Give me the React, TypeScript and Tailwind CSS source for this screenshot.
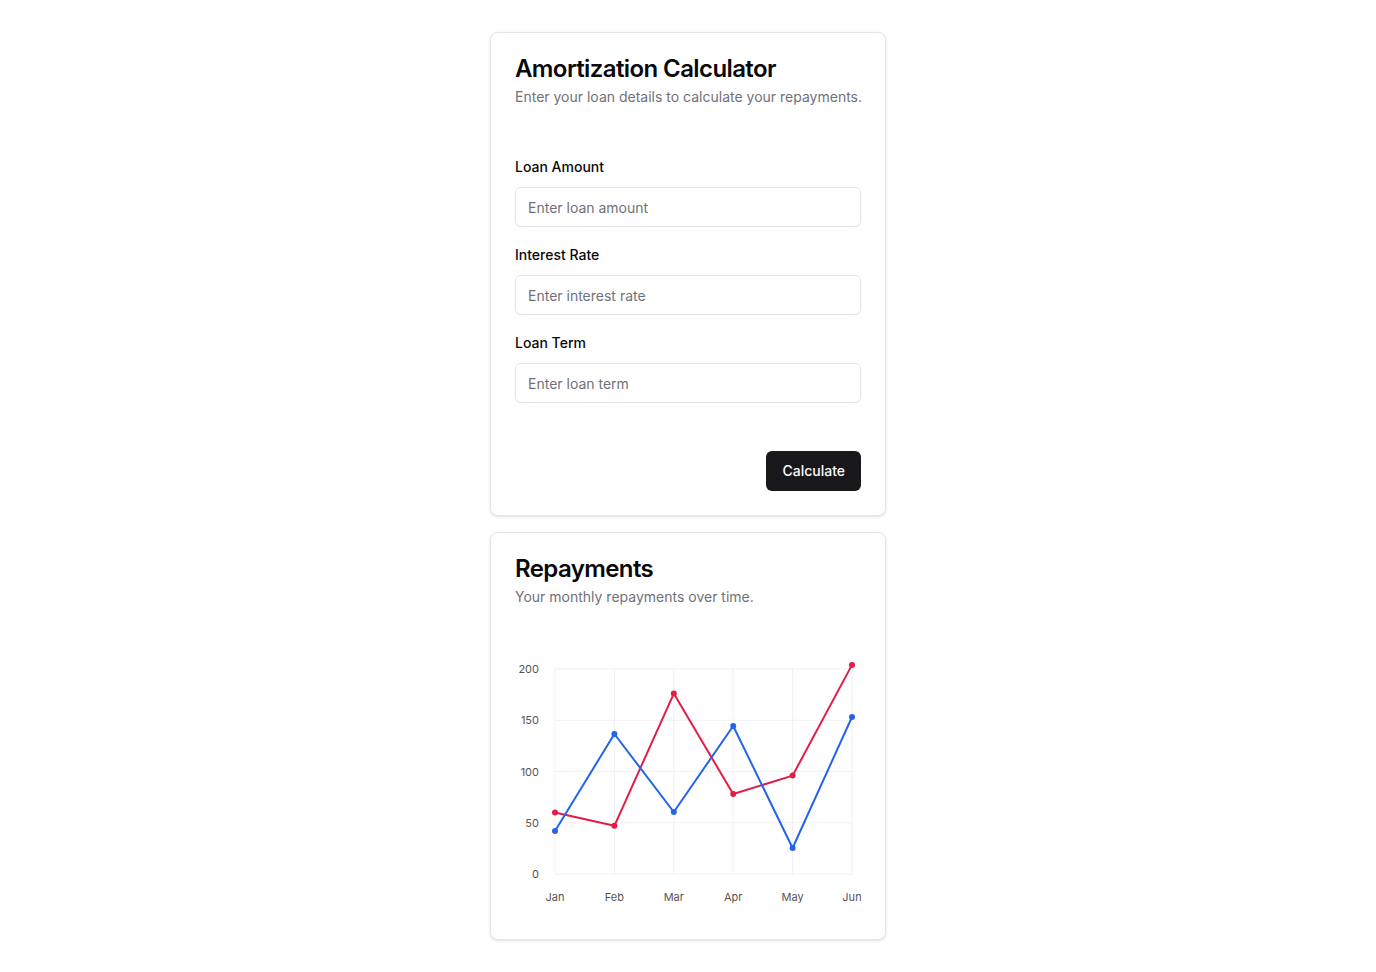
const months = ["Jan", "Feb", "Mar", "Apr", "May", "Jun"];
const red = [60, 47, 176, 78, 96, 204];
const blue = [42, 136.6, 60.5, 144.4, 25.4, 153.2];
const ticks = [0, 50, 100, 150, 200];

// plot area inside the svg
const left = 40;
const right = 337;
const top = 38;
const bottom = 243;

const xAt = (i: number) => left + (i * (right - left)) / (months.length - 1);
const yAt = (v: number) => bottom - (v / 200) * (bottom - top);

function RepaymentsChart() {
  const line = (vals: number[]) =>
    vals.map((v, i) => `${i === 0 ? "M" : "L"}${xAt(i)},${yAt(v)}`).join(" ");

  return (
    <svg width={346} height={284} className="block">
      {/* grid */}
      {ticks.map((t) => (
        <line key={t} x1={left} x2={right} y1={yAt(t)} y2={yAt(t)} stroke="#f1f1f3" strokeWidth={1} />
      ))}
      {months.map((m, i) => (
        <line key={m} x1={xAt(i)} x2={xAt(i)} y1={top} y2={bottom} stroke="#f1f1f3" strokeWidth={1} />
      ))}

      {/* axis labels */}
      {ticks.map((t) => (
        <text key={t} x={24} y={yAt(t) + 4} textAnchor="end" fontSize={11} fill="#555">
          {t}
        </text>
      ))}
      {months.map((m, i) => (
        <text key={m} x={xAt(i)} y={270} textAnchor="middle" fontSize={11} fill="#555">
          {m}
        </text>
      ))}

      {/* series */}
      <path d={line(red)} fill="none" stroke="#e11d48" strokeWidth={2} strokeLinejoin="round" />
      <path d={line(blue)} fill="none" stroke="#2563eb" strokeWidth={2} strokeLinejoin="round" />
      {red.map((v, i) => (
        <circle key={`r${i}`} cx={xAt(i)} cy={yAt(v)} r={3} fill="#e11d48" />
      ))}
      {blue.map((v, i) => (
        <circle key={`b${i}`} cx={xAt(i)} cy={yAt(v)} r={3} fill="#2563eb" />
      ))}
    </svg>
  );
}

function Field({ label, placeholder }: { label: string; placeholder: string }) {
  return (
    <div>
      <label className="block text-sm font-medium leading-none text-[#09090b]">{label}</label>
      <input
        type="text"
        placeholder={placeholder}
        className="mt-[13px] h-10 w-full rounded-md border border-[#e4e4e7] bg-white px-3 text-sm text-[#09090b] placeholder:text-[#71717a] outline-none"
      />
    </div>
  );
}

export default function App() {
  return (
    <div
      className="min-h-screen bg-white pt-8 pb-8"
      style={{ fontFamily: "Inter, 'Noto Sans', sans-serif" }}
    >
      <div className="mx-auto flex w-[396px] flex-col gap-4">
        {/* CALCULATOR */}
        <div className="rounded-lg border border-[#e4e4e7] bg-white shadow-sm">
          <div className="flex flex-col gap-1.5 p-6">
            <h2 className="text-2xl font-semibold leading-none tracking-tight text-[#09090b]">
              Amortization Calculator
            </h2>
            <p className="whitespace-nowrap text-sm text-[#71717a]">
              Enter your loan details to calculate your repayments.
            </p>
          </div>

          <div className="flex flex-col gap-[21px] px-6 pt-[29px]">
            <Field label="Loan Amount" placeholder="Enter loan amount" />
            <Field label="Interest Rate" placeholder="Enter interest rate" />
            <Field label="Loan Term" placeholder="Enter loan term" />
          </div>

          <div className="flex justify-end p-6 pt-12">
            <button className="h-10 rounded-md bg-[#18181b] px-4 text-sm font-medium text-[#fafafa]">
              Calculate
            </button>
          </div>
        </div>

        {/* REPAYMENTS */}
        <div className="rounded-lg border border-[#e4e4e7] bg-white shadow-sm">
          <div className="flex flex-col gap-1.5 p-6">
            <h2 className="text-2xl font-semibold leading-none tracking-tight text-[#09090b]">
              Repayments
            </h2>
            <p className="text-sm text-[#71717a]">Your monthly repayments over time.</p>
          </div>
          <div className="px-6 pb-6">
            <RepaymentsChart />
          </div>
        </div>
      </div>
    </div>
  );
}
